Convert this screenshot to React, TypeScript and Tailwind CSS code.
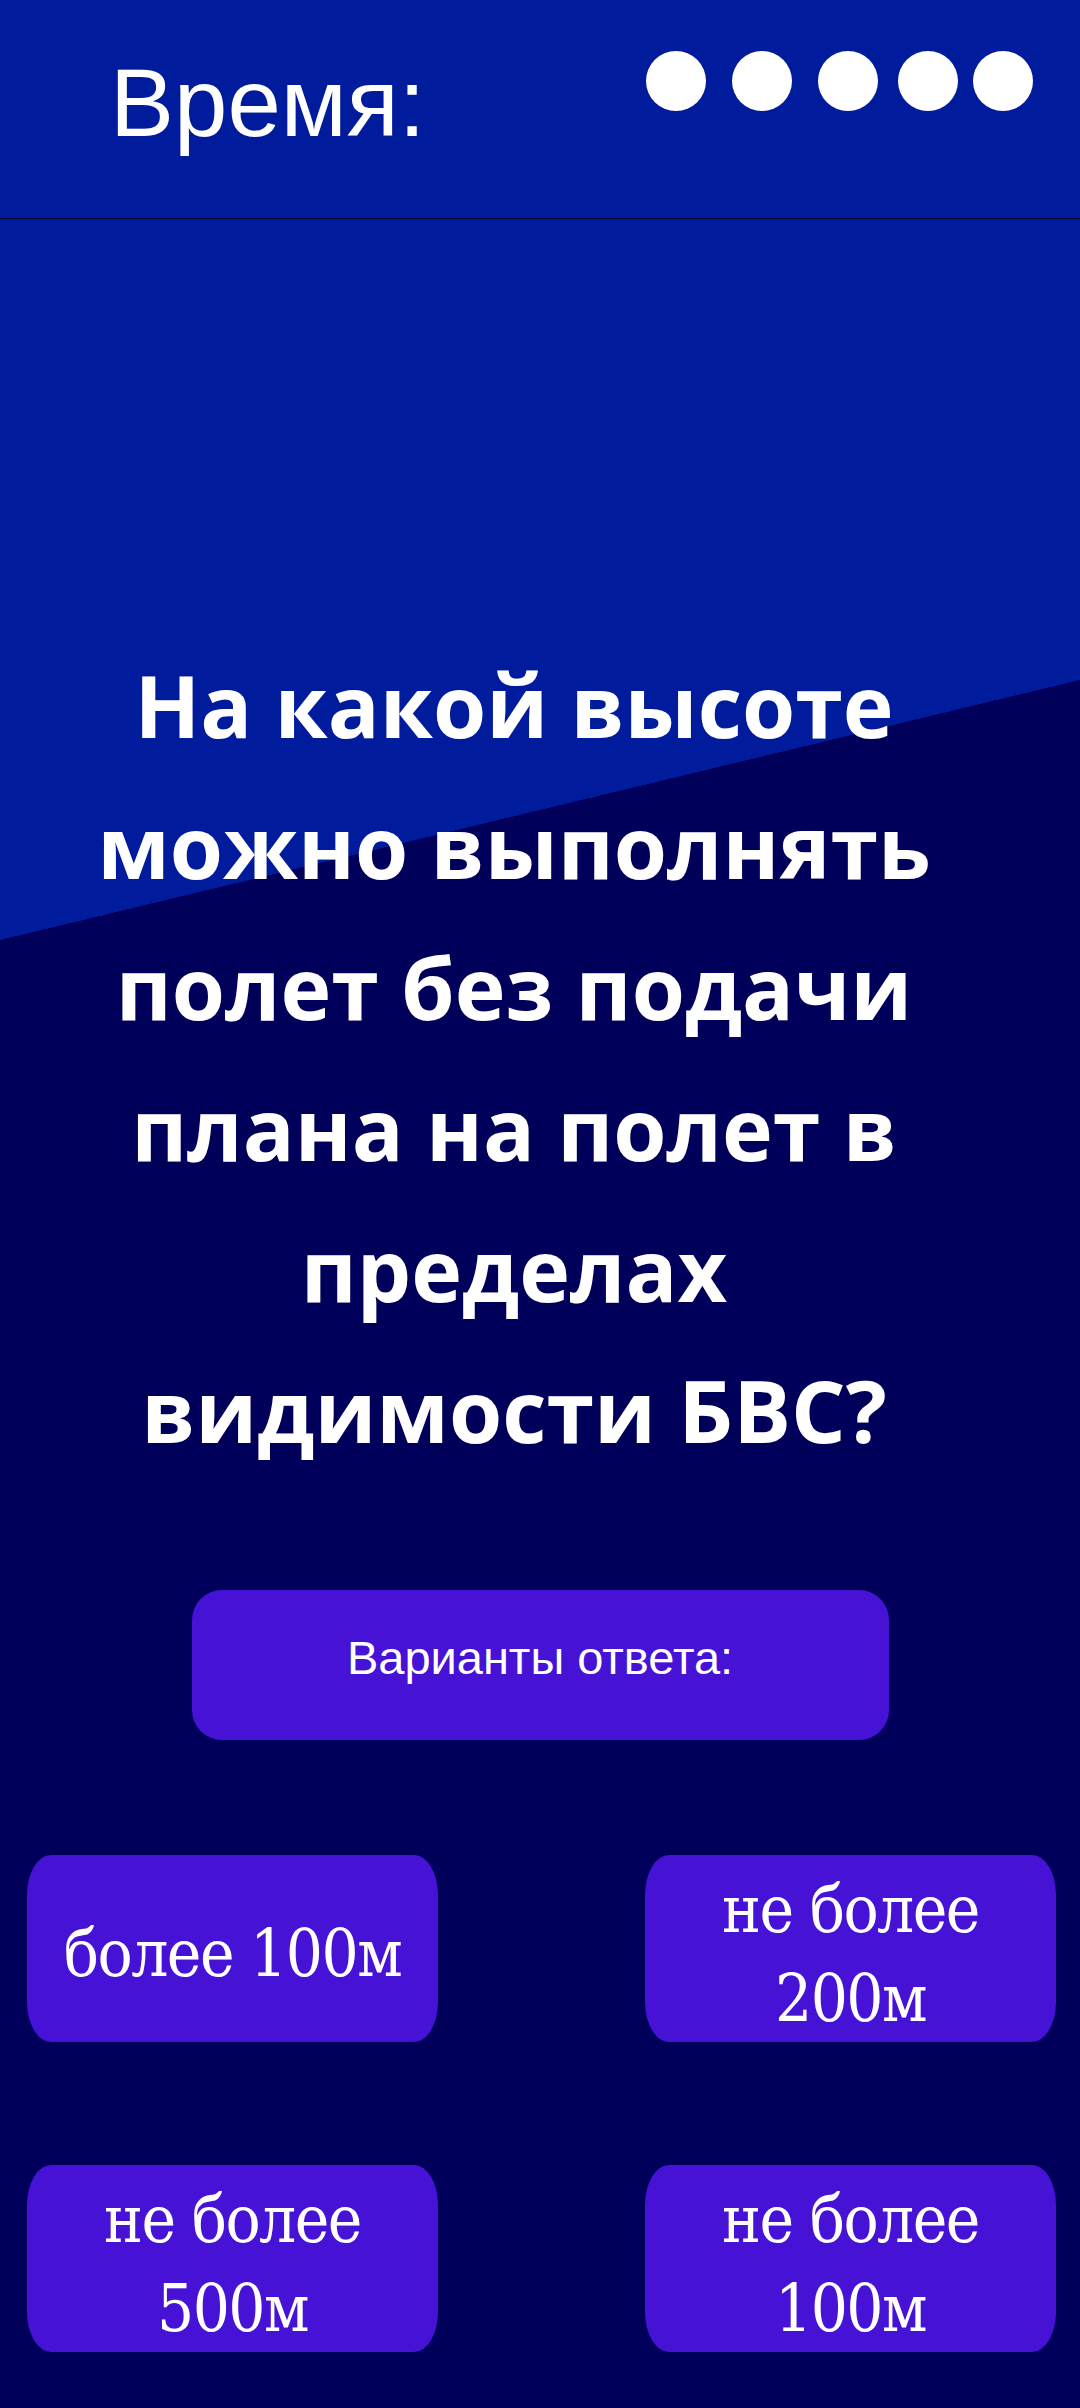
import React from 'react';

const answers = [
  ['более 100м'],
  ['не более', '200м'],
  ['не более', '500м'],
  ['не более', '100м'],
];

const App: React.FC = () => {
  return (
    <div className="h-[2408px] w-[1080px] overflow-hidden bg-[linear-gradient(166.46deg,#001c9c_35.23%,#00005a_35.23%)]">
      {/* шапка */}
      <div className="flex h-[219px] items-start border-b border-[#00002a]">
        <div
          className="pl-[110px] pt-[55px] text-[96px] leading-none text-white"
          style={{ fontFamily: '"Liberation Sans", Arial, sans-serif' }}
        >
          Время:
        </div>
        <div className="ml-auto flex pr-[47px] pt-[51px]">
          <div className="h-[60px] w-[60px] rounded-full bg-white"></div>
          <div className="ml-[26px] h-[60px] w-[60px] rounded-full bg-white"></div>
          <div className="ml-[26px] h-[60px] w-[60px] rounded-full bg-white"></div>
          <div className="ml-[20px] h-[60px] w-[60px] rounded-full bg-white"></div>
          <div className="ml-[15px] h-[60px] w-[60px] rounded-full bg-white"></div>
        </div>
      </div>

      {/* вопрос */}
      <div
        className="mt-[415px] pr-[52px] text-center text-[86px] font-bold leading-[141px] text-white"
        style={{ fontFamily: '"Open Sans", "Noto Sans", sans-serif' }}
      >
        На какой высоте
        <br />
        можно выполнять
        <br />
        полет без подачи
        <br />
        плана на полет в
        <br />
        пределах
        <br />
        видимости БВС?
      </div>

      <div className="mx-auto mt-[110px] h-[150px] w-[697px] rounded-[30px] bg-[#4512d6] pt-[41px] text-center">
        <span
          className="text-[47px] leading-[54px] text-white"
          style={{ fontFamily: '"Liberation Sans", Arial, sans-serif' }}
        >
          Варианты ответа:
        </span>
      </div>

      {/* ответы */}
      <div className="mt-[115px] grid grid-cols-2 gap-x-[207px] gap-y-[123px] pl-[27px] pr-[24px]">
        {answers.map((lines, i) => (
          <button
            key={i}
            className="flex h-[187px] flex-col items-center justify-center rounded-[24px/40px] bg-[#4512d6] pt-[10px] text-[65px] leading-[89px] tracking-[-1.5px] text-white font-stretch-condensed"
            style={{ fontFamily: '"DejaVu Serif Condensed", "DejaVu Serif", serif' }}
          >
            {lines.map((l) => (
              <span key={l}>{l}</span>
            ))}
          </button>
        ))}
      </div>
    </div>
  );
};

export default App;
